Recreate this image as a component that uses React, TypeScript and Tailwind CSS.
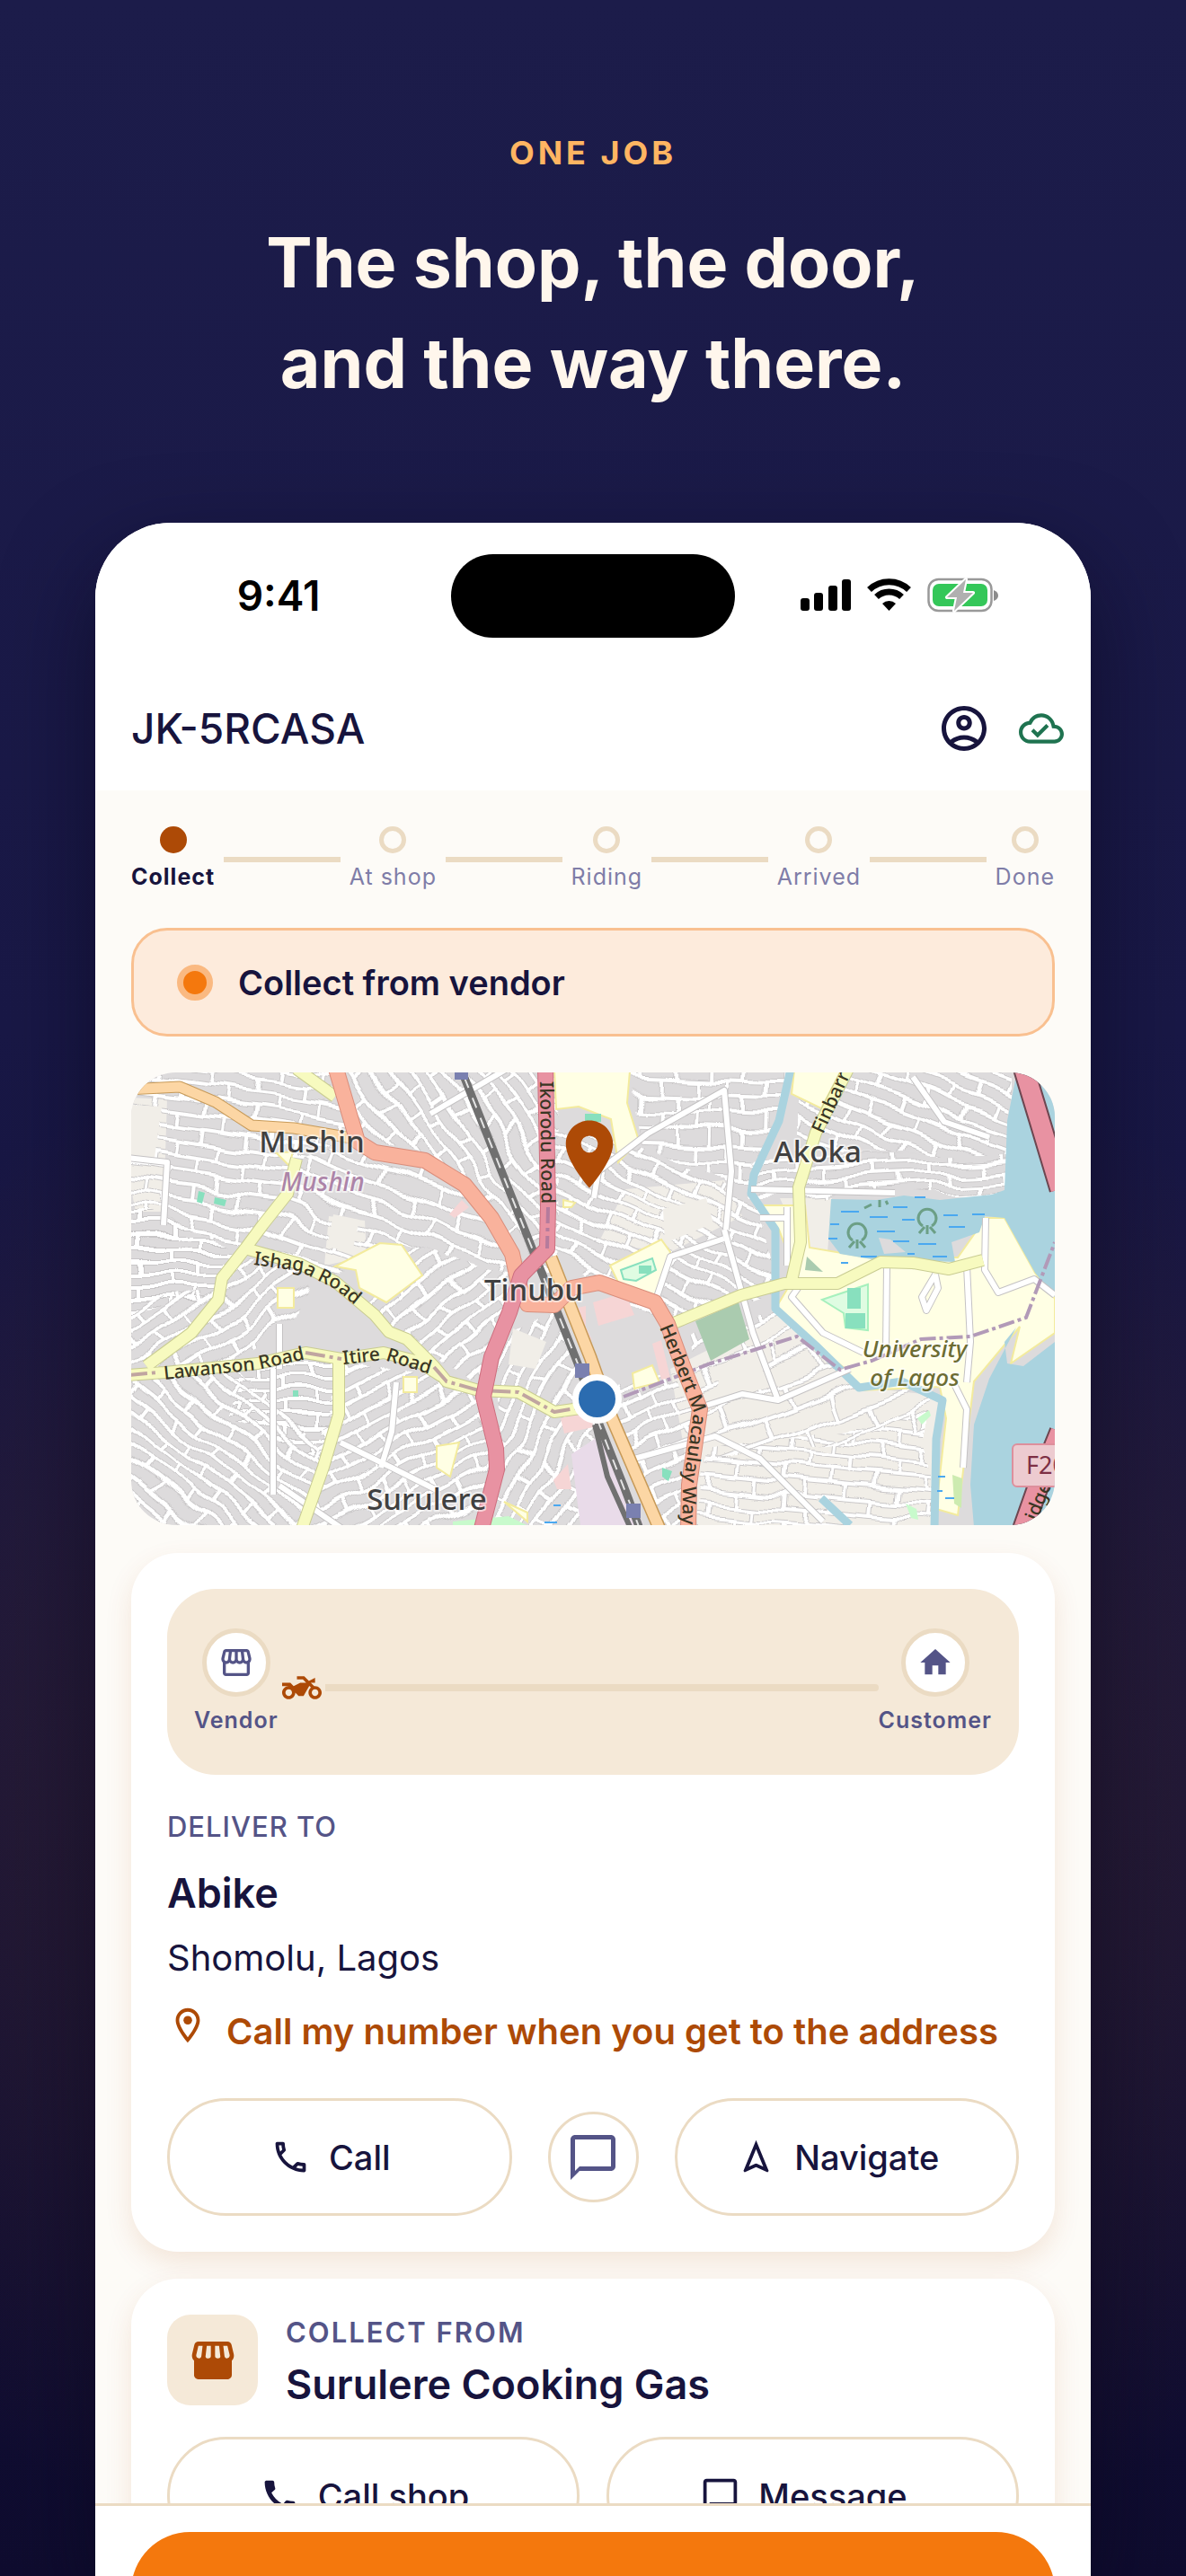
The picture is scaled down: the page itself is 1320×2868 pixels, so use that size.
import { Fragment, type ReactNode } from "react";
import {
  MdCall,
  MdChatBubbleOutline,
  MdHome,
  MdLocationOn,
  MdOutlineCall,
  MdOutlineCloudDone,
  MdOutlineLocationOn,
  MdOutlineNavigation,
  MdOutlineStorefront,
  MdTwoWheeler,
} from "react-icons/md";

/* ---------- icons ---------- */

function AccountIcon() {
  return (
    <svg viewBox="0 0 24 24" className="size-[60px]" fill="currentColor" aria-hidden="true">
      <path d="M12 2C6.48 2 2 6.48 2 12s4.48 10 10 10 10-4.48 10-10S17.52 2 12 2zM7.35 18.5C8.66 17.56 10.26 17 12 17s3.34.56 4.65 1.5C15.34 19.44 13.74 20 12 20s-3.34-.56-4.65-1.5zm10.79-1.38C16.45 15.8 14.32 15 12 15s-4.45.8-6.14 2.12C4.7 15.73 4 13.95 4 12c0-4.42 3.58-8 8-8s8 3.58 8 8c0 1.95-.7 3.73-1.86 5.12z" />
      <path d="M12 6c-1.93 0-3.5 1.57-3.5 3.5S10.07 13 12 13s3.5-1.57 3.5-3.5S13.93 6 12 6zm0 5c-.83 0-1.5-.67-1.5-1.5S11.17 8 12 8s1.5.67 1.5 1.5S12.83 11 12 11z" />
    </svg>
  );
}

function ShopFilledIcon() {
  return (
    <svg viewBox="0 0 24 24" className="size-14" aria-hidden="true">
      <path
        fill="currentColor"
        d="M21.9 8.89l-1.05-4.37C20.63 3.62 19.85 3 18.94 3H5.05c-.9 0-1.69.63-1.9 1.52L2.1 8.89c-.24 1.02-.02 2.06.62 2.88.08.11.19.19.28.29V19c0 1.1.9 2 2 2h14c1.1 0 2-.9 2-2v-6.94c.09-.09.2-.18.28-.28.64-.82.87-1.87.62-2.89z"
      />
      <path
        fill="#f5e9d8"
        d="M4.05 9.37L5.05 5h2.02l-.57 4.86C6.43 10.5 5.95 11 5.39 11c-.9 0-1.55-.8-1.34-1.63zM8.46 10.05L9.06 5H11v5c0 .55-.45 1-1.25 1-.8 0-1.35-.4-1.29-.95zM13 5h1.94l.6 5.05c.06.55-.45.95-1.2.95C13.5 11 13 10.55 13 10zM18.91 4.99l1.04 4.38c.21.83-.42 1.63-1.34 1.63-.54 0-1.03-.5-1.11-1.14L16.93 5z"
      />
    </svg>
  );
}

function StatusIcons() {
  return (
    <svg viewBox="0 0 222 40" className="h-10 w-[222px]" aria-hidden="true">
      <g fill="#000">
        <rect x="0" y="23" width="10" height="14" rx="3" />
        <rect x="15" y="17" width="10" height="20" rx="3" />
        <rect x="31" y="9" width="10" height="28" rx="3" />
        <rect x="46" y="2" width="10" height="35" rx="3" />
      </g>
      <g fill="none" stroke="#000" strokeWidth="7">
        <path d="M76.5 13.5 A32 32 0 0 1 120.5 13.5" />
        <path d="M84.5 21.5 A20.5 20.5 0 0 1 112.5 21.5" />
      </g>
      <path d="M98.500 37 L91 29 A11 11 0 0 1 106 29 Z" fill="#000" />
      <rect x="142.500" y="2" width="70" height="35" rx="11" fill="#fff" stroke="#999" strokeWidth="2.500" />
      <rect x="147" y="7" width="61" height="25" rx="7" fill="#34c759" />
      <path d="M215 14 q5 2 5 6 q0 4 -5 6 z" fill="#8c8c8c" />
      <path
        d="M184 2 L163 22 H174 L171 37 L192 17 H181 Z"
        fill="#b0b0b0"
        stroke="#fff"
        strokeWidth="4"
        strokeLinejoin="round"
        paintOrder="stroke"
      />
    </svg>
  );
}

/* ---------- map ---------- */

const DISTRICTS = [
  { id: "d1", angle: 8, w: 26, h: 16, points: "-20,-20 240,-20 245,75 190,95 125,195 -20,150" },
  { id: "d2", angle: 0, w: 34, h: 13, points: "-20,150 125,195 100,250 -20,270" },
  { id: "d3", angle: -32, w: 24, h: 16, points: "-20,260 100,240 120,200 200,225 170,290 60,340 -20,340" },
  { id: "d4", angle: 20, w: 30, h: 18, points: "190,95 250,80 330,100 400,160 430,225 300,190 220,225 130,195" },
  { id: "d5", angle: 55, w: 24, h: 16, points: "240,-20 470,-20 475,230 430,225 400,150 330,95 255,75" },
  { id: "d6", angle: 0, w: 28, h: 14, points: "110,330 232,320 232,385 215,430 110,390" },
  { id: "d7", angle: 38, w: 30, h: 14, points: "-20,335 120,330 215,420 190,520 -20,520" },
  { id: "d8", angle: -28, w: 26, h: 15, points: "232,320 390,355 405,430 395,520 190,520" },
  { id: "d9", angle: -40, w: 24, h: 16, points: "300,190 430,225 395,350 340,330 260,260" },
  { id: "d10", angle: 24, w: 26, h: 15, points: "465,60 560,80 700,140 720,240 600,280 520,230 465,200" },
  { id: "d11", angle: 2, w: 20, h: 18, points: "550,-20 740,-20 690,130 570,85" },
  { id: "d12", angle: 20, w: 26, h: 16, points: "735,-20 980,-20 975,90 735,90" },
  { id: "d13", angle: -3, w: 28, h: 13, points: "700,95 975,90 965,138 690,138" },
  { id: "d14", angle: -22, w: 20, h: 16, points: "520,350 610,330 630,380 615,520 585,520" },
  { id: "d15", angle: 5, w: 26, h: 16, points: "640,420 890,380 890,520 630,520" },
  { id: "d16", angle: -20, w: 40, h: 26, points: "620,290 720,260 800,340 890,360 890,400 640,430" },
  { id: "d17", angle: -60, w: 26, h: 16, points: "415,290 480,270 520,380 560,520 400,520 400,400" },
];

const SECONDARY = [
  "M184 -4 L227 27",
  "M184 96 L174 135 L147 169 L127 196 L101 229 L97 253 L67 290 L17 327",
  "M127 196 L187 213 L227 233 L271 270 L287 289 L307 297 L337 327 L351 344 L387 354 L431 356 L471 378 L500 374",
  "M-4 337 L37 334 L141 324 L194 312 L234 319 L281 312 L320 322 L345 338",
  "M231 321 L231 381 L214 439 L190 508",
  "M798 -4 L762 67 L743 128 L745 189 L734 236",
  "M604 279 L679 248 L727 235 L786 235 L834 211 L870 212 L910 219 L948 209",
];

const STREETS = [
  "M333 46 L420 -5",
  "M-5 95 L40 100 L36 170",
  "M165 460 L235 508",
  "M233 412 L290 440 L340 465",
  "M295 345 L290 400 L278 440",
  "M165 280 L165 330 M158 330 L158 470",
  "M515 140 L520 110 L575 68 L660 20 L668 110 L662 175",
  "M583 256 L600 205 L660 185",
  "M660 175 L692 290 L720 365",
  "M636 372 L680 358 L720 365 L800 330",
  "M560 430 L650 405 L700 430 L770 500",
  "M870 5 L905 55 L955 72",
  "M841 215 L840 310",
  "M930 215 L934 300 L930 345",
  "M951 162 L950 220 L965 245 L1005 230 L1028 248",
  "M745 236 L735 250 L770 290 L815 312",
  "M895 225 L880 250 L885 265 L898 240 L895 225",
  "M915 345 L930 375 L926 440",
  "M690 130 L850 134",
  "M700 162 L730 162 M730 150 L730 215",
];

const PRIMARY =
  "M228 -4 L241 40 L252 77 L271 89 L327 98 L371 125 L401 162 L424 202 L431 235 L441 258 L471 259 L490 240 L521 234 L583 256 L597 280 L614 327 L633 375 L621 459 L620 508";
const MOTORWAY =
  "M461 -4 L464 148 L463 196 L434 226 L421 267 L401 317 L392 361 L406 419 L407 442 L390 508";
const BRIDGE = "M993 -6 L1010 50 L1034 130 M1034 400 L1010 459 L992 510";

const TUFTS = [
  { x: 808, y: 178 },
  { x: 886, y: 162 },
];

function CityMap() {
  return (
    <svg
      viewBox="0 0 1028 504"
      preserveAspectRatio="xMidYMid slice"
      className="block h-[504px] w-full"
      role="img"
      aria-label="Map of Mushin, Surulere and Akoka"
    >
      <defs>
        {DISTRICTS.map((d) => (
          <pattern
            key={d.id}
            id={d.id}
            width={d.w * 2}
            height={d.h * 2}
            patternUnits="userSpaceOnUse"
            patternTransform={`rotate(${d.angle})`}
          >
            <g fill="none">
              <path
                d={`M0 4 H${d.w * 2} M0 ${d.h + 4} H${d.w * 2} M6 4 V${d.h + 4} M${d.w + 9} ${d.h + 4} V${d.h * 2} M${d.w + 9} 0 V4`}
                stroke="#c9c7c8"
                strokeWidth="6"
              />
              <path
                d={`M0 4 H${d.w * 2} M0 ${d.h + 4} H${d.w * 2} M6 4 V${d.h + 4} M${d.w + 9} ${d.h + 4} V${d.h * 2} M${d.w + 9} 0 V4`}
                stroke="#fff"
                strokeWidth="4"
              />
            </g>
          </pattern>
        ))}
        <filter id="bend" x="0" y="0" width="100%" height="100%">
          <feTurbulence type="fractalNoise" baseFrequency="0.014" numOctaves="2" seed="4" />
          <feDisplacementMap in="SourceGraphic" scale="30" xChannelSelector="R" yChannelSelector="G" />
        </filter>
        <path id="ishaga" d="M136 214 L187 221 L227 241 L275 280" />
        <path id="lawanson" d="M37 342 L141 331 L200 318" />
        <path id="itire" d="M236 325 L281 320 L345 340" />
        <path id="ikorodu" d="M455 10 L457 170" />
        <path id="herbert" d="M588 284 L607 330 L626 378 L614 459 L613 540" />
        <path id="finbarr" d="M770 69 L806 -10" />
      </defs>

      <rect width="1028" height="504" fill="#dddbdc" />
      <g fill="#f1eee8">
        <path d="M0 28 L40 30 L36 155 L5 155 L0 130 Z" />
        <path d="M220 160 L260 165 L262 205 L215 215 Z" />
        <path d="M550 130 L660 120 L680 160 L600 200 L520 190 Z" />
        <path d="M600 330 L720 270 L810 350 L900 360 L895 504 L630 504 Z" />
        <path d="M722 140 L780 140 L775 200 L750 200 Z" />
      </g>
      <g filter="url(#bend)">
        {DISTRICTS.map((d) => (
          <polygon key={d.id} points={d.points} fill={`url(#${d.id})`} />
        ))}
      </g>
      <g fill="#f1eee8">
        <path d="M425 285 L462 300 L450 330 L420 325 Z" />
        <path d="M0 36 L34 38 L26 95 L0 92 Z" />
        <path d="M225 158 L254 164 L246 200 L218 194 Z" />
        <path d="M592 152 L640 140 L648 168 L594 190 Z" />
        <path d="M655 328 L700 312 L706 352 L652 362 Z" />
      </g>

      {/* schools and campuses */}
      <g fill="#ffffe4" stroke="#f3eb9d" strokeWidth="2">
        <path d="M227 216 L277 190 L301 192 L324 226 L284 256 L254 240 L250 220 Z" />
        <path d="M471 -2 L555 -2 L552 34 L565 76 L542 100 L534 52 L498 38 L473 41 Z" />
        <path d="M533 215 L590 186 L600 200 L584 250 L545 240 Z" />
        <path d="M738 -2 L790 -2 L768 40 L735 24 Z" />
        <path d="M163 240 L181 240 L181 262 L163 262 Z M303 339 L318 339 L318 356 L303 356 Z" />
        <path d="M340 416 L365 412 L355 450 L340 440 Z M415 478 L441 490 L441 500 Z" />
        <path d="M558 335 L580 326 L588 345 L560 352 Z" />
        <path d="M162 90 L180 88 L176 104 Z" />
        <path d="M481 142 L494 145 L490 150 L481 150 Z" />
        <path d="M696 148 L721 175 L740 225 L717 263 L762 304 L796 331 L810 354 L900 350 L907 385 L896 486 L920 493 L938 344 L989 283 L979 324 L1028 290 L1028 252 L1006 223 L972 162 L951 162 L920 206 L820 206 L755 195 L750 148 Z" />
      </g>
      <g fill="#f6d5d5">
        <path d="M354 158 L368 142 L376 150 L360 162 Z M478 385 L512 375 L514 395 L482 402 Z M470 454 L486 436 L490 464 L474 464 Z" />
        <path d="M496 262 L506 260 L506 290 L514 300 Z M514 256 L550 245 L560 270 L520 282 Z M580 302 L590 298 L600 340 L590 342 Z" />
      </g>
      <path d="M490 425 L528 400 L570 504 L500 504 Z" fill="#e9dbe9" />
      <g fill="#88e0be">
        <path d="M75 132 L82 134 L79 146 L73 144 Z M93 139 L106 142 L104 149 L92 146 Z M180 354 H186 V361 H180 Z" />
        <path d="M505 46 H523 V55 H505 Z M591 440 L602 444 L598 455 L591 450 Z" />
      </g>
      <path d="M545 220 L580 207 L584 220 L562 232 L548 230 Z" fill="#dffce2" stroke="#88e0be" strokeWidth="2" />
      <path d="M565 215 h14 v9 h-14 Z" fill="#88e0be" />
      <path d="M628 277 L676 256 L688 297 L645 321 Z" fill="#aacbaf" />
      <path d="M769 253 L820 236 L820 287 L795 284 L793 268 Z" fill="#dffce2" stroke="#a6f0bd" strokeWidth="2" />
      <path d="M797 240 H812 V263 H797 Z M795 268 H817 V285 H795 Z" fill="#88e0be" />
      <path d="M875 385 L888 376 L890 382 L880 392 Z M862 480 L874 486 L876 498 L868 496 Z M358 500 L420 494 L440 504 L358 504 Z" fill="#c8facc" />
      <path d="M752 205 L770 222 L750 220 Z" fill="#aacbaf" />
      <path d="M914 448 L925 452 L924 485 L916 480 Z" fill="#cdebb0" />

      {/* water */}
      <g fill="#aad3df">
        <path d="M986 -2 L975 54 L972 131 L958 136 L900 142 L860 137 L830 142 L779 141 L776 185 L789 202 L824 208 L917 211 L913 189 L944 178 L950 160 L972 162 L1006 223 L1028 250 L1028 -2 Z" />
        <path d="M1028 300 L993 327 L975 324 L972 300 L985 284 L955 341 L938 392 L934 459 L938 506 L1028 506 Z" />
      </g>
      <path d="M832 184 L845 186 L862 200 L838 202 Z" fill="#dddbdc" />
      <path
        d="M734 -4 L721 54 L693 114 L690 135 L717 175 L717 263 L762 304 L810 351 L858 344 L903 365 L896 408 L894 508 M768 474 L800 504"
        fill="none"
        stroke="#aad3df"
        strokeWidth="9"
        strokeLinejoin="round"
      />
      <g stroke="#4aa8f0" strokeWidth="2">
        <path d="M790 155 h20 M822 161 h20 M848 150 h16 M872 139 h12 M858 164 h14 M904 159 h16 M936 158 h14 M910 172 h18 M778 169 h10 M776 185 h10 M830 177 h20 M848 188 h18 M876 191 h20 M864 202 h8 M892 205 h16 M812 205 h18 M790 212 h8" />
        <path d="M898 450 h8 M897 466 h6 M906 474 h10 M470 482 h8 M460 501 h14" />
      </g>
      <g fill="none" stroke="#6c9f86" strokeWidth="3">
        {TUFTS.map((t) => (
          <path
            key={t.x}
            d={`M${t.x - 5} ${t.y + 9} A10 10 0 1 1 ${t.x + 5} ${t.y + 9} M${t.x} ${t.y + 8} v10 M${t.x - 3} ${t.y + 10} l-6 7 M${t.x + 3} ${t.y + 10} l6 7`}
          />
        ))}
        <path d="M824 147 l-8 4 M833 142 v8 M842 147 l-2 -4" />
      </g>

      {/* local streets */}
      <g fill="none" strokeLinejoin="round">
        <g stroke="#c4c2c3" strokeWidth="8">
          {STREETS.map((d) => (
            <path key={d} d={d} />
          ))}
        </g>
        <g stroke="#fff" strokeWidth="6">
          {STREETS.map((d) => (
            <path key={d} d={d} />
          ))}
        </g>
      </g>

      {/* boundary */}
      <path
        d="M548 361 L645 324 L741 294 L789 331 L824 321 L879 297 L934 294 L996 273 L1028 189"
        fill="none"
        stroke="#b29ab8"
        strokeWidth="4"
        strokeDasharray="18 4 4 4"
      />

      {/* secondary roads */}
      <g fill="none" strokeLinejoin="round">
        <g stroke="#c9cc92" strokeWidth="14">
          {SECONDARY.map((d) => (
            <path key={d} d={d} />
          ))}
        </g>
        <g stroke="#f7fabf" strokeWidth="12">
          {SECONDARY.map((d) => (
            <path key={d} d={d} />
          ))}
        </g>
        <path
          d="M-4 337 L30 334 M194 312 L234 319 M337 328 L351 344 L387 354 L431 356 L471 378 L494 374"
          stroke="#c0a5a0"
          strokeWidth="4"
          strokeDasharray="22 5 4 5"
        />

        {/* railway */}
        <path d="M371 6 L497 324 L521 392 L548 460 L566 508" stroke="#707070" strokeWidth="9" />
        <path d="M371 6 L497 324 L521 392 L566 508" stroke="#e4e4e4" strokeWidth="2" strokeDasharray="12 12" />
        <path d="M516 392 L530 450 L556 508" stroke="#707070" strokeWidth="6" />

        {/* trunk and primary roads */}
        <path d="M-4 19 L54 16 L94 33 L134 59 L181 62 L245 73" stroke="#c79a58" strokeWidth="13" />
        <path d="M-4 19 L54 16 L94 33 L134 59 L181 62 L245 73" stroke="#fcd6a4" strokeWidth="11" />
        <path d="M467 206 L511 317 L535 385 L588 508" stroke="#c79a58" strokeWidth="15" />
        <path d="M467 206 L511 317 L535 385 L588 508" stroke="#fcd6a4" strokeWidth="12" />
        <path d={PRIMARY} stroke="#d98d7b" strokeWidth="18" />
        <path d={PRIMARY} stroke="#f9b29c" strokeWidth="16" />
        <path d={MOTORWAY} stroke="#cd6e7e" strokeWidth="18" />
        <path d={MOTORWAY} stroke="#e892a2" strokeWidth="16" />
        <path d="M464 150 L463 196" stroke="#b57b9c" strokeWidth="4" strokeDasharray="18 5 4 5" />
        <path d={BRIDGE} stroke="#6d4650" strokeWidth="25" />
        <path d={BRIDGE} stroke="#e892a2" strokeWidth="21" />
      </g>
      <g fill="#7a80b0">
        <path d="M360 0 h15 v8 h-15 Z M494 324 h16 v16 h-16 Z M551 480 h16 v16 h-16 Z" />
      </g>

      {/* labels */}
      <g
        fontFamily="'Noto Sans', 'Open Sans', sans-serif"
        strokeLinejoin="round"
        paintOrder="stroke"
        stroke="#fff"
        strokeOpacity="0.6"
        strokeWidth="4"
      >
        <g fontSize="33" fontWeight="500" fill="#404040" textAnchor="middle">
          <text x="201" y="89">Mushin</text>
          <text x="448" y="254">Tinubu</text>
          <text x="329" y="487">Surulere</text>
          <text x="764" y="100">Akoka</text>
        </g>
        <text x="213" y="132" fontSize="28" fontStyle="italic" fontWeight="500" fill="#ac84a8" textAnchor="middle">
          Mushin
        </text>
        <g fontSize="26" fontStyle="italic" fontWeight="500" fill="#6c6c33" textAnchor="middle">
          <text x="872" y="317">University</text>
          <text x="872" y="349">of Lagos</text>
        </g>
      </g>
      <g fontFamily="'Noto Sans', 'Open Sans', sans-serif" fontSize="21" fontWeight="500" fill="#3a3624">
        <text><textPath href="#ishaga">Ishaga Road</textPath></text>
        <text><textPath href="#lawanson">Lawanson Road</textPath></text>
        <text><textPath href="#itire">Itire Road</textPath></text>
        <text><textPath href="#ikorodu">Ikorodu Road</textPath></text>
        <text><textPath href="#herbert">Herbert Macaulay Way</textPath></text>
        <text><textPath href="#finbarr">Finbarr</textPath></text>
        <text transform="translate(1008 500) rotate(-68)">idge</text>
      </g>
      <rect x="981" y="414" width="70" height="47" rx="5" fill="#edcbd0" stroke="#dd8f9c" strokeWidth="2" />
      <text x="996" y="447" fontFamily="'Noto Sans', sans-serif" fontSize="27" fill="#7d2f44">F20</text>
    </svg>
  );
}

/* ---------- pieces ---------- */

const STEPS = ["Collect", "At shop", "Riding", "Arrived", "Done"];

function Stepper() {
  return (
    <ol className="flex items-center gap-[10px]">
      {STEPS.map((label, i) => (
        <Fragment key={label}>
          {i > 0 && <li aria-hidden="true" className="h-[6px] flex-1 bg-[#ebdbc3]" />}
          <li className="flex flex-col items-center gap-[10px]">
            <span
              className={
                i === 0
                  ? "size-[30px] rounded-full bg-[#ad4a06]"
                  : "size-[30px] rounded-full border-[5px] border-[#ebdbc3]"
              }
            />
            <span
              className={
                i === 0
                  ? "text-[25px] leading-[33px] font-bold tracking-[1px] text-[#17143d]"
                  : "text-[25px] leading-[33px] tracking-[1px] text-[#7f7da8]"
              }
            >
              {label}
            </span>
          </li>
        </Fragment>
      ))}
    </ol>
  );
}

function PillButton({ icon, children }: { icon: ReactNode; children: ReactNode }) {
  return (
    <button
      type="button"
      className="flex h-[131px] flex-1 items-center justify-center gap-5 rounded-full border-[3px] border-[#ebdbc3] pr-5 text-[38px] leading-[50px] font-medium text-[#17143d]"
    >
      {icon}
      {children}
    </button>
  );
}

function Stop({ icon, label }: { icon: ReactNode; label: string }) {
  return (
    <div className="flex flex-col items-center gap-[10px]">
      <span className="flex size-[76px] items-center justify-center rounded-full border-[5px] border-[#ebdbc3] bg-white text-[#545487]">
        {icon}
      </span>
      <span className="text-[25px] leading-[33px] font-semibold tracking-[1px] text-[#545487]">{label}</span>
    </div>
  );
}

export default function App() {
  return (
    <main className="flex h-screen flex-col overflow-hidden bg-[#181744] bg-[radial-gradient(ellipse_1100px_900px_at_50%_70%,rgba(170,90,10,0.22),rgba(170,90,10,0.12)_50%,transparent),linear-gradient(#1c1c4a,#191846_40%,#0f0c2f)] font-['Inter',sans-serif]">
      <header className="pt-[148px] pb-[122px] text-center">
        <p className="text-[36px] leading-[44px] font-bold tracking-[4px] text-[#ffb562]">ONE JOB</p>
        <h1 className="mt-11 text-[77px] leading-[112px] font-bold text-[#fff6ec]">
          The shop, the door,
          <br />
          and the way there.
        </h1>
      </header>

      <section className="mx-[106px] flex min-h-0 flex-1 flex-col overflow-hidden rounded-t-[84px] bg-[#fdfbf7] shadow-[0_40px_100px_rgba(8,6,28,0.6)]">
        <div className="grid h-40 shrink-0 grid-cols-[1fr_316px_1fr] items-center bg-white pt-[2px]">
          <span className="pl-3 text-center text-[46px] leading-[56px] font-semibold text-black">9:41</span>
          <span className="h-[93px] rounded-full bg-black" />
          <span className="flex justify-center pr-7">
            <StatusIcons />
          </span>
        </div>

        <div className="flex h-[138px] shrink-0 items-center bg-white pr-[30px] pl-10 text-[#17143d]">
          <h2 className="flex-1 text-[46px] leading-[60px] font-medium">JK-5RCASA</h2>
          <button type="button" aria-label="Account">
            <AccountIcon />
          </button>
          <span className="ml-[31px] text-[#1f7350]">
            <MdOutlineCloudDone className="size-[50px]" />
          </span>
        </div>

        <div className="min-h-0 flex-1 overflow-hidden px-10 pt-10">
          <Stepper />

          <div className="mt-10 flex h-[121px] items-center gap-[28px] rounded-[40px] border-[3px] border-[#f9c090] bg-[#fdebdc] pl-12">
            <span className="size-[40px] rounded-full border-[7px] border-[#fab981] bg-[#f4780d]" />
            <p className="text-[38px] leading-[52px] font-semibold text-[#17143d]">Collect from vendor</p>
          </div>

          <div className="relative mt-10 overflow-hidden rounded-[50px]">
            <CityMap />
            <MdLocationOn className="absolute top-[46px] left-[465px] size-[90px] text-[#ad4a06]" />
            <span className="absolute top-[336px] left-[491px] size-[55px] rounded-full border-[7px] border-white bg-[#2b6cb0]" />
          </div>

          <section className="mt-[31px] rounded-[52px] bg-white p-10 shadow-[0_12px_30px_rgba(173,74,6,0.12)]">
            <div className="flex items-center rounded-[54px] bg-[#f5e9d8] px-[30px] py-[44px]">
              <Stop icon={<MdOutlineStorefront className="size-10" />} label="Vendor" />
              <div className="flex flex-1 items-center pt-3">
                <MdTwoWheeler className="mx-1 size-[44px] text-[#ad4a06]" />
                <span className="h-2 flex-1 rounded-r-full bg-[#ebdbc3]" />
              </div>
              <Stop icon={<MdHome className="size-10" />} label="Customer" />
            </div>

            <p className="mt-[38px] text-[31px] leading-10 font-medium tracking-[1px] text-[#545487]">DELIVER TO</p>
            <h3 className="mt-6 text-[45px] leading-[60px] font-semibold text-[#17143d]">Abike</h3>
            <p className="mt-3 text-[40px] leading-[60px] text-[#17143d]">Shomolu, Lagos</p>
            <p className="mt-[22px] flex items-start gap-5 text-[40px] leading-[60px] font-semibold text-[#ad4a06]">
              <MdOutlineLocationOn className="size-[46px] shrink-0" />
              Call my number when you get to the address
            </p>

            <div className="mt-[44px] flex items-center gap-10">
              <PillButton icon={<MdOutlineCall className="size-[45px]" />}>Call</PillButton>
              <button
                type="button"
                aria-label="Message customer"
                className="flex size-[101px] items-center justify-center rounded-full border-[3px] border-[#ebdbc3] text-[#545487]"
              >
                <MdChatBubbleOutline className="size-[60px]" />
              </button>
              <PillButton icon={<MdOutlineNavigation className="size-[45px]" />}>Navigate</PillButton>
            </div>
          </section>

          <section className="mt-[30px] rounded-[52px] bg-white p-10 shadow-[0_12px_30px_rgba(173,74,6,0.12)]">
            <div className="flex items-start gap-[31px]">
              <span className="flex size-[101px] items-center justify-center rounded-[26px] bg-[#f5e9d8] text-[#ad4a06]">
                <ShopFilledIcon />
              </span>
              <div className="flex flex-col gap-2">
                <p className="text-[31px] leading-10 font-semibold tracking-[2px] text-[#545487]">COLLECT FROM</p>
                <h3 className="text-[45px] leading-[60px] font-semibold text-[#17143d]">Surulere Cooking Gas</h3>
              </div>
            </div>
            <div className="mt-7 flex gap-[30px]">
              <PillButton icon={<MdCall className="size-[45px]" />}>Call shop</PillButton>
              <PillButton icon={<MdChatBubbleOutline className="size-[45px]" />}>Message</PillButton>
            </div>
          </section>
        </div>

        <footer className="h-[81px] shrink-0 overflow-hidden border-t-[3px] border-[#ebdbc3] bg-white px-10 pt-[29px]">
          <button type="button" aria-label="Continue" className="h-[131px] w-full rounded-full bg-[#f4780d]" />
        </footer>
      </section>
    </main>
  );
}
